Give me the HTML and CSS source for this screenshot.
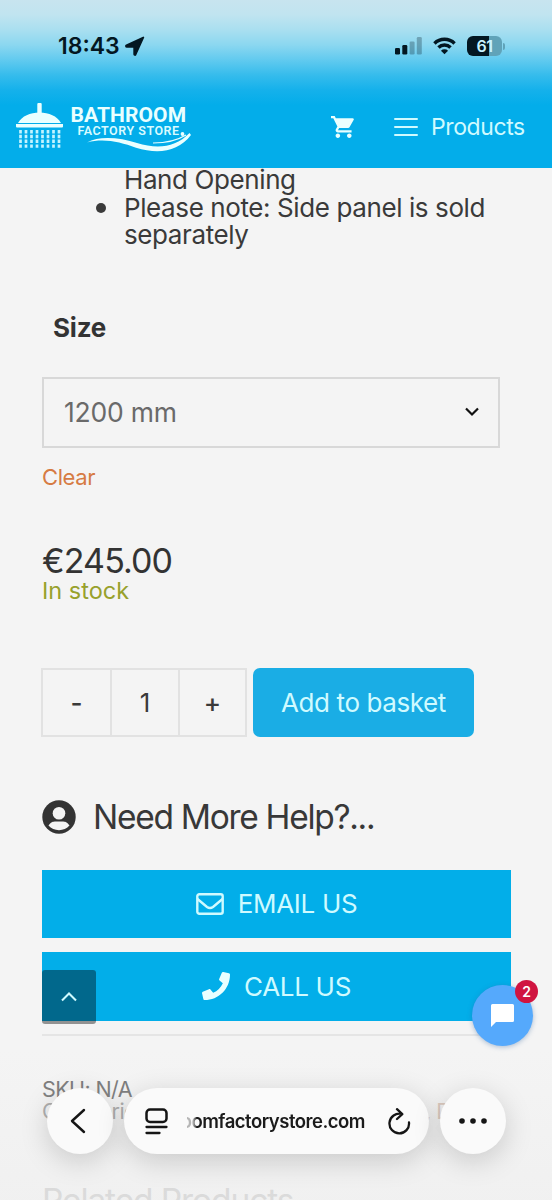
FILE: index.html
```html
<!DOCTYPE html>
<html lang="en">
<head>
<meta charset="utf-8">
<meta name="viewport" content="width=device-width, initial-scale=1">
<title>Bathroom Factory Store</title>
<link rel="stylesheet" href="styles.css">
</head>
<body>
<div class="screen">
  <header class="header">
    <div class="status">
      <span class="time">18:43</span>
      <svg class="location" width="20" height="20" viewBox="0 0 20 20"><path d="M18.300 1.500 1.500 9.400c-.8.4-.6 1.400.3 1.400h7.400v7.400c0 .9 1 1.100 1.400.3z" fill="#031722" stroke="#031722" stroke-width="1.800" stroke-linejoin="round"/></svg>
      <div class="indicators">
        <svg width="27" height="18" viewBox="0 0 27 18"><g fill="#031722"><rect x="0" y="11" width="5" height="6.500" rx="1.300"/><rect x="7.300" y="8" width="5" height="9.500" rx="1.300"/><g opacity=".28"><rect x="14.600" y="4.500" width="5" height="13" rx="1.300"/><rect x="21.800" y="0" width="5" height="17.500" rx="1.300"/></g></g></svg>
        <svg width="23" height="18" viewBox="0 0 24 18"><g fill="none" stroke="#031722" stroke-width="3.600"><path d="M1.500 6.300a15 15 0 0 1 21 0"/><path d="M5.700 10.500a9 9 0 0 1 12.600 0"/></g><path d="M12 17.600 8.300 13.900a5.300 5.300 0 0 1 7.400 0z" fill="#031722"/></svg>
        <span class="battery"><span class="level">61</span><i class="tip"></i></span>
      </div>
    </div>
    <nav class="nav">
      <svg class="logo" width="178" height="50" viewBox="0 0 178 50">
        <g fill="#eaffff">
          <rect x="21.300" y="1" width="4.400" height="12" rx="1"/>
          <path d="M2 21C6 14 14 10.500 23.500 10.500S41 14 45 21z"/>
          <path d="M0 22h47v2.600a1 1 0 0 1-1 1H1a1 1 0 0 1-1-1z"/>
        </g>
        <g stroke="#c5f4ff" stroke-width="2.700" stroke-dasharray="3.400 1.400"><path d="M4.500 28v18.500M10 28v18.500M15.500 28v18.500M21 28v18.500M26.500 28v18.500M32 28v18.500M37.500 28v18.500M43 28v18.500"/></g>
        <text class="brand" x="54.500" y="20">BATHROOM</text>
        <text class="brand-sub" x="61.500" y="33">FACTORY STORE</text>
        <circle cx="166.500" cy="32" r="1.900" fill="#eaffff"/>
        <path d="M71 40.500c12-7 33-5 50 .5 20 6 38 5 52.500-10l1.500 2c-13 17-33 19.500-55 12.700C104 40 88 36 71 40.500z" fill="#eaffff"/>
        <path d="M137 41c13 0 25-3 33-8" fill="none" stroke="#eaffff" stroke-width="1.200"/>
      </svg>
      <svg class="cart" width="24" height="22" viewBox="1 2 21 20" preserveAspectRatio="none"><path fill="#eaffff" d="M7 18c-1.100 0-1.990.9-1.990 2S5.900 22 7 22s2-.9 2-2-.9-2-2-2zM1 2v2h2l3.600 7.590-1.350 2.450c-.16.28-.25.61-.25.960 0 1.100.9 2 2 2h12v-2H7.420c-.14 0-.25-.11-.25-.25l.03-.12.900-1.630h7.450c.75 0 1.410-.41 1.750-1.030l3.580-6.490A1 1 0 0 0 20 4H5.210l-.94-2H1zm16 16c-1.100 0-1.990.9-1.990 2s.89 2 1.990 2 2-.9 2-2-.9-2-2-2z"/></svg>
      <svg class="burger" width="24" height="20" viewBox="0 0 24 20"><path d="M1 2h22M1 10h22M1 18h22" stroke="#cffaff" stroke-width="2" stroke-linecap="round"/></svg>
      <span class="products">Products</span>
    </nav>
  </header>

  <main class="content">
    <ul class="features">
      <li class="cont"><span>Hand Opening</span></li>
      <li>Please note: Side panel is sold separately</li>
    </ul>
    <div class="label">Size</div>
    <div class="select"><span>1200 mm</span><svg width="16" height="10" viewBox="0 0 16 10"><path d="m2 1.500 6 6 6-6" fill="none" stroke="#111" stroke-width="2.200"/></svg></div>
    <a class="clear">Clear</a>
    <div class="price">€245.00</div>
    <div class="stock">In stock</div>
    <div class="buy">
      <div class="qty"><span class="step">-</span><span class="one">1</span><span class="step">+</span></div>
      <div class="add">Add to basket</div>
    </div>
    <div class="help">
      <svg width="34" height="34" viewBox="0 0 34 34"><circle cx="17" cy="17" r="16.700" fill="#333"/><circle cx="17" cy="13.200" r="6.300" fill="#f4f4f4"/><path d="M6.500 25.500c3-5 6.500-4 10.500-4s7.500-1 10.500 4c-5 6.200-16 6.200-21 0z" fill="#f4f4f4"/></svg>
      <span>Need More Help?...</span>
    </div>
    <div class="cta email"><svg width="28" height="22" viewBox="0 0 28 22"><rect x="1.300" y="1.300" width="25.400" height="19.400" rx="2" fill="none" stroke="#cffaff" stroke-width="2.400"/><path d="m1.500 6 9.500 8q3 2 6 0l9.500-8" fill="none" stroke="#cffaff" stroke-width="2.400"/></svg><span>EMAIL US</span></div>
    <div class="cta call"><svg width="28" height="28" viewBox="0 0 512 512"><path fill="#eaffff" d="M493.400 24.600l-104-24c-11.300-2.600-22.900 3.300-27.500 13.900l-48 112c-4.200 9.800-1.400 21.300 6.900 28l60.600 49.600c-36 76.700-98.900 140.500-177.200 177.200l-49.600-60.600c-6.800-8.300-18.200-11.100-28-6.900l-112 48C3.900 366.500-2 378.100.6 389.400l24 104C27.100 504.200 36.700 512 48 512c256.100 0 464-207.500 464-464 0-11.200-7.700-20.900-18.600-23.400z"/></svg><span>CALL US</span></div>
    <hr class="rule">
    <div class="meta">SKU: N/A</div>
    <div class="meta cats"><span>Categories:</span><span class="cat-link">, D</span></div>
    <h2 class="related">Related Products</h2>
  </main>

  <div class="to-top"><svg width="18" height="12" viewBox="0 0 18 12"><path d="m2 9.500 7-7 7 7" fill="none" stroke="#cffaff" stroke-width="2.100"/></svg></div>
  <div class="chat"><svg width="23" height="23" viewBox="0 0 23 23"><path fill="#fff" d="M1.500 0h20A1.500 1.500 0 0 1 23 1.500v15a1.500 1.500 0 0 1-1.500 1.500H5l-5 5V1.500A1.500 1.500 0 0 1 1.500 0z"/></svg><span class="badge">2</span></div>

  <div class="toolbar">
    <div class="round"><svg class="back" width="16" height="26" viewBox="0 0 16 26"><path d="M14 2 2 13l12 11" fill="none" stroke="#151515" stroke-width="2.400" stroke-linecap="round" stroke-linejoin="round"/></svg></div>
    <div class="address">
      <svg width="23" height="27" viewBox="0 0 23 27"><rect x="1.500" y="1.500" width="20" height="12.500" rx="3.500" fill="none" stroke="#151515" stroke-width="2.500"/><path d="M1.500 19h20M1.500 25h13" stroke="#151515" stroke-width="2.300" stroke-linecap="round"/></svg>
      <span class="url"><span>oomfactorystore.com</span></span>
      <svg width="23" height="27" viewBox="0 0 23 27"><path d="M13.500 6A9.800 9.800 0 1 0 21 14.500M9 1.200l5.300 4.900L9 11" fill="none" stroke="#151515" stroke-width="2.300" stroke-linecap="round" stroke-linejoin="round"/></svg>
    </div>
    <div class="round"><svg width="28" height="6" viewBox="0 0 28 6"><g fill="#151515"><circle cx="3" cy="3" r="2.800"/><circle cx="14" cy="3" r="2.800"/><circle cx="25" cy="3" r="2.800"/></g></svg></div>
  </div>
</div>
</body>
</html>
```
FILE: styles.css
```css
* { box-sizing: border-box; }
body { margin: 0; font-family: Inter, "Liberation Sans", sans-serif; color: #3a3a3a; }
svg { display: block; flex: none; }
.screen { position: relative; width: 552px; height: 1200px; overflow: hidden; background: #f4f4f4; }

.header { position: relative; z-index: 2; height: 168px; background: linear-gradient(#c8e4ef 0, #c0e4f0 15px, #a9dff0 30px, #8bd7f0 45px, #61caef 60px, #36bcec 75px, #15b1eb 90px, #03adea 105px, #03adea 100%); }
.status { display: flex; align-items: center; height: 90px; padding: 1px 50px 0 58px; }
.time { font-size: 23px; font-weight: 600; color: #031722; letter-spacing: 0; width: 67px; white-space: nowrap; }
.indicators { display: flex; align-items: center; gap: 11px; margin-left: auto; }
.battery { position: relative; display: flex; width: 35px; height: 20px; border-radius: 6px; background: linear-gradient(90deg, #031722 62%, #60a3b9 62%); }
.level { width: 35px; text-align: center; font-size: 16px; font-weight: 600; line-height: 20px; color: #c9f2ff; letter-spacing: -.5px; }
.tip { position: absolute; left: 36px; top: 7px; width: 2px; height: 7px; border-radius: 0 2px 2px 0; background: #60a3b9; }
.nav { display: flex; align-items: center; height: 73px; padding: 0 0 0 16px; }
.brand { font: 700 21px Roboto, sans-serif; fill: #eaffff; letter-spacing: .1px; }
.brand-sub { font: 600 12.500px Roboto, sans-serif; fill: #d9fbff; letter-spacing: .52px; }
.cart { margin-left: 137px; }
.burger { margin-left: 39px; }
.products { margin-left: 13px; font-size: 23px; color: #cffaff; letter-spacing: -.4px; }

.content { padding: 0 41px 0 42px; }
.features { margin: -2px 0 0; padding: 0 0 0 82px; list-style: none; font-size: 26px; line-height: 27.500px; letter-spacing: -.4px; }
.features li { position: relative; }
.features li:not(.cont)::before { content: ""; position: absolute; left: -28px; top: 9px; width: 10px; height: 10px; border-radius: 50%; background: #3a3a3a; }
.label { margin: 63px 0 0 11px; font-size: 26px; line-height: 32px; font-weight: 700; letter-spacing: -.2px; color: #333; }
.select { display: flex; align-items: center; justify-content: space-between; width: 458px; height: 71px; margin-top: 33px; padding: 0 18px 0 20px; border: 2px solid #d8d8d8; font-size: 26.500px; letter-spacing: -.2px; color: #6a6a6a; }
.clear { display: block; margin-top: 15px; font-size: 22px; line-height: 28px; color: #d67b43; letter-spacing: -.4px; }
.price { margin-top: 52px; font-size: 34px; line-height: 36px; color: #333; letter-spacing: -.9px; }
.stock { margin-top: -1px; font-size: 23.500px; line-height: 26px; color: #98a12c; letter-spacing: 0; }
.buy { display: flex; gap: 6px; margin: 64px 0 0 -1px; }
.qty { display: grid; grid-template-columns: 67px 70px 65px; width: 206px; height: 69px; border: 2px solid #e2e2e2; font-size: 26px; }
.qty span { display: flex; align-items: center; justify-content: center; }
.step { font-weight: 500; }
.one { border: solid #e2e2e2; border-width: 0 2px; }
.add { display: flex; align-items: center; justify-content: center; width: 221px; height: 69px; border-radius: 7px; background: #1aade5; color: #cffaff; font-size: 26px; letter-spacing: -.4px; }
.help { display: flex; align-items: center; gap: 17px; height: 44px; margin-top: 58px; font-size: 33.500px; letter-spacing: -1.300px; color: #383838; }
.cta { display: flex; align-items: center; justify-content: center; gap: 14px; width: 469px; height: 69px; background: #02aee9; color: #cffaff; font-size: 26px; letter-spacing: -.3px; }
.email { margin-top: 31px; height: 68px; }
.call { margin-top: 14px; }
.rule { width: 469px; height: 2px; margin: 13px 0 0; border: 0; background: #e5e5e5; }
.meta { margin-top: 42px; font-size: 21.500px; line-height: 22px; color: #737373; letter-spacing: -.6px; }
.cats { display: flex; margin-top: 0; color: #a3a3a3; }
.cat-link { margin-left: 273px; color: #d8c4b8; }
.related { margin: 58px 0 0; font-size: 33.500px; line-height: 42px; font-weight: 400; letter-spacing: -1.100px; color: #d0d0d0; }

.to-top { position: absolute; z-index: 2; left: 42px; top: 970px; display: flex; align-items: center; justify-content: center; width: 54px; height: 54px; border-radius: 3px; background: rgba(0, 0, 0, .4); }
.chat { position: absolute; z-index: 2; left: 472px; top: 985px; display: flex; align-items: center; justify-content: center; width: 61px; height: 61px; border-radius: 50%; background: #55a9fc; box-shadow: 0 1px 5px rgba(50, 100, 160, .4); }
.badge { position: absolute; left: 43px; top: -5px; width: 23px; height: 23px; border-radius: 50%; background: #d01440; color: #fff; font-size: 14px; font-weight: 600; line-height: 23px; text-align: center; }

.toolbar { position: absolute; z-index: 1; left: 0; right: 0; bottom: 0; display: flex; gap: 11px; height: 150px; padding: 38px 46px 0 47px; background: linear-gradient(rgba(235, 235, 235, 0), rgba(235, 235, 235, .4)); }
.round, .address { display: flex; align-items: center; height: 66px; border-radius: 33px; background: #fafafa; box-shadow: 0 7px 28px rgba(0, 0, 0, .17); }
.round { justify-content: center; width: 66px; }
.back { margin-right: 4px; }
.address { width: 305px; padding: 0 18px 0 21px; }
.url { display: flex; justify-content: flex-end; width: 178px; margin: 0 23px 0 19px; overflow: hidden; white-space: nowrap; font-size: 18.500px; font-weight: 600; color: #1b1b1b; letter-spacing: -.5px; -webkit-mask-image: linear-gradient(90deg, rgba(0, 0, 0, .3) 6px, #000 10px); mask-image: linear-gradient(90deg, rgba(0, 0, 0, .3) 6px, #000 10px); }
```
